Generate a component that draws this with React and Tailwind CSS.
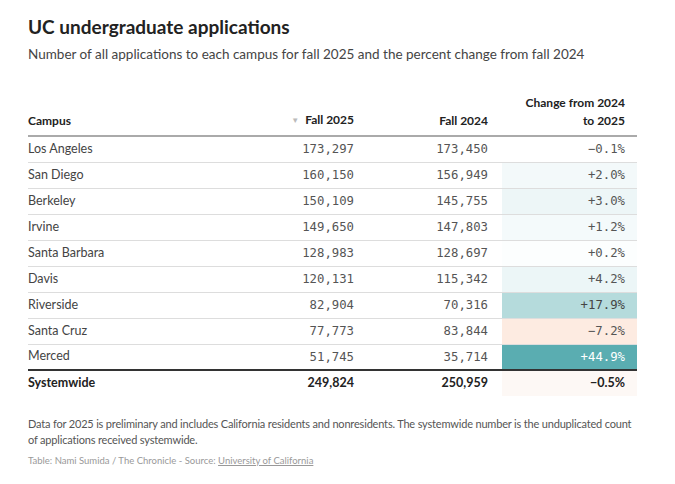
import React from 'react';

const rows = [
  { campus: 'Los Angeles', y25: '173,297', y24: '173,450', change: '\u22120.1%', bg: 'bg-white', fg: 'text-[#555]' },
  { campus: 'San Diego', y25: '160,150', y24: '156,949', change: '+2.0%', bg: 'bg-[#f3f9fa]', fg: 'text-[#555]' },
  { campus: 'Berkeley', y25: '150,109', y24: '145,755', change: '+3.0%', bg: 'bg-[#edf6f7]', fg: 'text-[#555]' },
  { campus: 'Irvine', y25: '149,650', y24: '147,803', change: '+1.2%', bg: 'bg-[#f4fafb]', fg: 'text-[#555]' },
  { campus: 'Santa Barbara', y25: '128,983', y24: '128,697', change: '+0.2%', bg: 'bg-[#fcfefe]', fg: 'text-[#555]' },
  { campus: 'Davis', y25: '120,131', y24: '115,342', change: '+4.2%', bg: 'bg-[#ecf6f7]', fg: 'text-[#555]' },
  { campus: 'Riverside', y25: '82,904', y24: '70,316', change: '+17.9%', bg: 'bg-[#b5dbdc]', fg: 'text-[#444]' },
  { campus: 'Santa Cruz', y25: '77,773', y24: '83,844', change: '\u22127.2%', bg: 'bg-[#fdebe1]', fg: 'text-[#555]' },
  { campus: 'Merced', y25: '51,745', y24: '35,714', change: '+44.9%', bg: 'bg-[#5aadb1]', fg: 'text-white' },
];

const sans = "font-['Lato','Open_Sans',sans-serif]";
const mono = "font-['DejaVu_Sans_Mono','Liberation_Mono',monospace]";

export default function App() {
  return (
    <div className={`w-[675px] h-[484px] bg-white pl-[28px] pt-[15px] ${sans}`}>
      <h1 className="text-[19px] font-bold text-[#222] leading-[24px]">UC undergraduate applications</h1>
      <p className="text-[13.5px] text-[#444] leading-[18px] mt-[6px] whitespace-nowrap">
        Number of all applications to each campus for fall 2025 and the percent change from fall 2024
      </p>

      <table className="w-[609px] table-fixed border-collapse mt-[31px]">
        <colgroup>
          <col className="w-[200px]" />
          <col className="w-[140px]" />
          <col className="w-[134px]" />
          <col className="w-[135px]" />
        </colgroup>
        <thead>
          <tr className="border-b-2 border-[#aaa] text-[12px] font-bold text-[#222] leading-[18px]">
            <th className="text-left align-bottom pb-[5px] pl-0">Campus</th>
            <th className="text-right align-bottom pb-[5px] pr-[14px]">
              <span className="text-[#bbb] text-[8px] mr-[6px] relative -top-[1px]">▼</span>Fall 2025
            </th>
            <th className="text-right align-bottom pb-[5px] pr-[14px]">Fall 2024</th>
            <th className="text-right align-bottom pb-[5px] pr-[12px]">
              Change from 2024
              <br />
              to 2025
            </th>
          </tr>
        </thead>
        <tbody>
          {rows.map((r, i) => (
            <tr
              key={r.campus}
              className={`h-[26px] ${i === rows.length - 1 ? 'border-b-2 border-[#333]' : 'border-b border-[#ddd]'}`}
            >
              <td className="text-[12.5px] text-[#444] p-0">{r.campus}</td>
              <td className={`text-right text-[12.3px] text-[#555] pr-[14px] ${mono}`}>{r.y25}</td>
              <td className={`text-right text-[12.3px] text-[#555] pr-[14px] ${mono}`}>{r.y24}</td>
              <td className={`text-right text-[12.3px] pr-[12px] ${mono} ${r.bg} ${r.fg}`}>{r.change}</td>
            </tr>
          ))}
          <tr className="h-[26px] text-[12.5px] font-bold text-[#222]">
            <td className="p-0">Systemwide</td>
            <td className="text-right pr-[14px]">249,824</td>
            <td className="text-right pr-[14px]">250,959</td>
            <td className="text-right pr-[12px] bg-[#fdf8f5]">&minus;0.5%</td>
          </tr>
        </tbody>
      </table>

      <p className="text-[11px] tracking-[-0.18px] text-[#555] leading-[16px] mt-[20px] whitespace-nowrap">
        Data for 2025 is preliminary and includes California residents and nonresidents. The systemwide number is the
        unduplicated count
        <br />
        of applications received systemwide.
      </p>
      <p className="text-[9.5px] text-[#999] mt-[6px]">
        Table: Nami Sumida / The Chronicle - Source: <span className="underline">University of California</span>
      </p>
    </div>
  );
}
